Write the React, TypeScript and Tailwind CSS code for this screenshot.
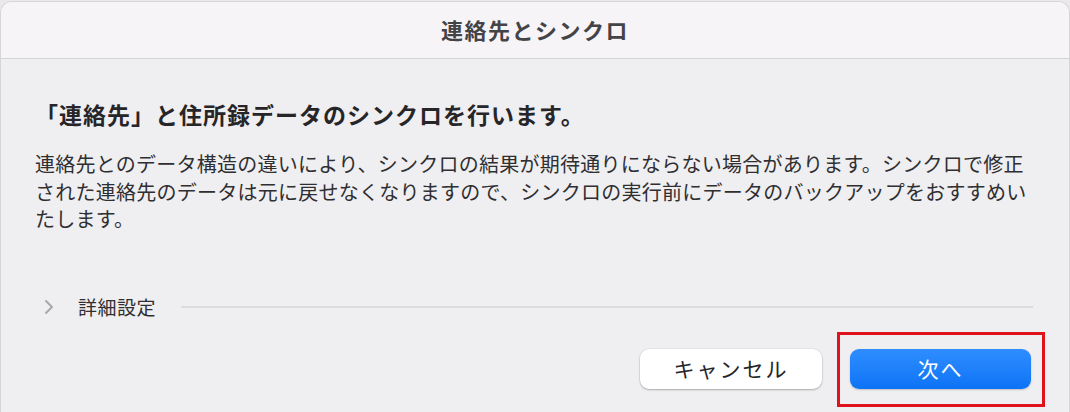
import React from "react";

export default function App() {
  const font = { fontFamily: '"Noto Sans CJK JP", "Noto Sans", sans-serif' };
  return (
    <div className="w-[1070px] h-[412px] bg-[#e9e8ea] overflow-hidden pt-px" style={font}>
      <div className="h-[411px] rounded-t-[12px] bg-[#efeef1] flex flex-col overflow-hidden border-t border-x border-[#d6d5d8]">
        <div className="h-[57px] shrink-0 bg-[#f6f4f7] border-b border-[#d3d2d5] flex items-center justify-center">
          <span className="text-[22px] leading-[28px] font-semibold text-[#444346] tracking-[1.5px] -mt-[2px]">連絡先とシンクロ</span>
        </div>
        <div className="flex flex-col pl-[34px]">
          <h1 className="mt-[39px] text-[23px] leading-[32px] font-bold text-[#262528] tracking-[1px]">
            「連絡先」と住所録データのシンクロを行います。
          </h1>
          <p className="mt-[20px] w-[1002px] text-[20px] leading-[27.5px] text-[#2f2e31] tracking-[0.25px]">
            連絡先とのデータ構造の違いにより、シンクロの結果が期待通りにならない場合があります。シンクロで修正された連絡先のデータは元に戻せなくなりますので、シンクロの実行前にデータのバックアップをおすすめいたします。
          </p>
          <div className="mt-[62px] h-[24px] flex items-center pr-[36px]">
            <svg width="10" height="16" viewBox="0 0 10 16" className="ml-[9px]">
              <path d="M2 2 L8 8 L2 14" fill="none" stroke="#a9a8ab" strokeWidth="2" strokeLinecap="round" strokeLinejoin="round" />
            </svg>
            <span className="ml-[24px] text-[19px] leading-[24px] text-[#2f2e31] tracking-[0.5px]">詳細設定</span>
            <div className="ml-[25px] flex-1 h-[2px] bg-[#dcdbde]" />
          </div>
          <div className="mt-[30px] flex justify-end items-center gap-[28px] pr-[38px]">
            <button className="w-[182px] h-[40px] rounded-[9px] bg-white text-[21px] text-[#262528] shadow-[0_1px_2px_rgba(0,0,0,0.25),0_0_0_0.5px_rgba(0,0,0,0.08)] tracking-[2px]">
              キャンセル
            </button>
            <div className="relative">
              <button className="w-[181px] h-[40px] rounded-[9px] bg-gradient-to-b from-[#2e8dff] to-[#0b73f6] text-white text-[21px] shadow-[0_1px_2px_rgba(0,0,0,0.2)] tracking-[2px]">
                次へ
              </button>
              <div className="absolute left-[-13px] right-[-14px] top-[-17px] bottom-[-18px] border-[3px] border-[#e0121c] pointer-events-none" />
            </div>
          </div>
        </div>
      </div>
    </div>
  );
}
